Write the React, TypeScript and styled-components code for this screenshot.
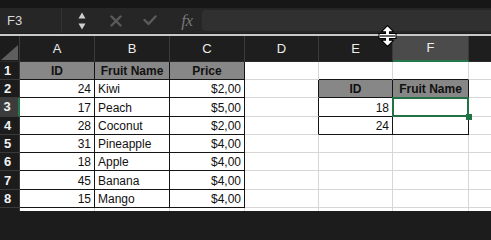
import React from "react";
import styled, { createGlobalStyle } from "styled-components";

const GlobalStyle = createGlobalStyle`
  html, body {
    margin: 0;
    padding: 0;
    background: #1c1c1c;
    overflow: hidden;
  }
  body {
    font-family: "Liberation Sans", Arial, sans-serif;
  }
`;

const Window = styled.div`
  position: relative;
  width: 491px;
  height: 211px;
  overflow: hidden;
  display: flex;
  flex-direction: column;
  background: #1c1c1c;
`;

const TitleStrip = styled.div`
  flex: none;
  height: 8px;
  background: #171717;
`;

const FormulaBar = styled.div`
  flex: none;
  height: 25px;
  display: flex;
  align-items: center;
  background: #262626;
`;

const NameBox = styled.div`
  box-sizing: border-box;
  width: 62px;
  height: 100%;
  display: flex;
  align-items: center;
  padding-left: 7px;
  border-right: 1px solid #313131;
  color: #d8d8d8;
  font-size: 13px;
`;

const BarIcon = styled.div<{ $gap: number; $w: number }>`
  flex: none;
  margin-left: ${(p) => p.$gap}px;
  width: ${(p) => p.$w}px;
  display: flex;
  align-items: center;
  justify-content: center;
`;

const Fx = styled.span`
  font-family: "Liberation Serif", "DejaVu Serif", serif;
  font-style: italic;
  font-size: 17px;
  color: #767676;
  letter-spacing: -0.5px;
`;

const FormulaInput = styled.div`
  flex: 1;
  margin-left: 6px;
  height: 21px;
  background: #303030;
  border-radius: 4px 0 0 4px;
`;

const Separator = styled.div`
  flex: none;
  height: 2px;
  margin-top: 1px;
  background: #c9c9c9;
`;

const Sheet = styled.div`
  flex: none;
  display: grid;
  width: 545px;
  grid-template-columns: 20px 75px 75px 75px 74px 74px 76px 76px;
  grid-template-rows: 25.7px repeat(9, 18.3px);
`;

const Corner = styled.div`
  box-sizing: border-box;
  background: #1c1c1c;
  border-right: 1px solid #3a3a3a;
  border-bottom: 1px solid #2a2a2a;
  display: flex;
  align-items: flex-end;
`;

const ColHead = styled.div<{ $sel?: boolean }>`
  box-sizing: border-box;
  background: ${(p) => (p.$sel ? "#4b4b4b" : "#1e1e1e")};
  border-right: 1px solid #3a3a3a;
  border-bottom: ${(p) => (p.$sel ? "2px solid #22784a" : "1px solid #2a2a2a")};
  display: flex;
  align-items: center;
  justify-content: center;
  color: #ededed;
  font-size: 13px;
`;

const RowHead = styled.div<{ $sel?: boolean }>`
  box-sizing: border-box;
  overflow: hidden;
  background: ${(p) => (p.$sel ? "#3c3c3c" : "#1c1c1c")};
  border-bottom: 1px solid #3a3a3a;
  border-right: ${(p) => (p.$sel ? "2px solid #22784a" : "1px solid #3a3a3a")};
  display: flex;
  align-items: center;
  justify-content: center;
  padding-right: 4px;
  color: #f2f2f2;
  font-size: 13px;
  font-weight: 700;
`;

type Align = "left" | "right" | "center";

const Cell = styled.div<{ $align: Align; $head: boolean; $right: string; $bottom: string }>`
  position: relative;
  box-sizing: border-box;
  background: ${(p) => (p.$head ? "#878787" : "#ffffff")};
  border-right: 1px solid ${(p) => p.$right};
  border-bottom: 1px solid ${(p) => p.$bottom};
  display: flex;
  align-items: flex-end;
  justify-content: ${(p) =>
    p.$align === "right" ? "flex-end" : p.$align === "center" ? "center" : "flex-start"};
  padding: 0 3px 1px;
  font-size: 12px;
  line-height: 14px;
  font-weight: ${(p) => (p.$head ? 700 : 400)};
  color: #111111;
  white-space: nowrap;
`;

const Selection = styled.div`
  position: absolute;
  left: -1px;
  top: -1px;
  right: -1px;
  bottom: -1px;
  border: 2px solid #217346;
  z-index: 2;
`;

const Handle = styled.div`
  position: absolute;
  right: -5px;
  bottom: -5px;
  width: 6px;
  height: 6px;
  background: #217346;
`;

const Cursor = styled.svg`
  position: absolute;
  left: 378px;
  top: 25px;
  z-index: 5;
`;

interface CellData {
  text?: string;
  align?: Align;
  head?: boolean;
}

const fruits: [number, string, string][] = [
  [24, "Kiwi", "$2,00"],
  [17, "Peach", "$5,00"],
  [28, "Coconut", "$2,00"],
  [31, "Pineapple", "$4,00"],
  [18, "Apple", "$4,00"],
  [45, "Banana", "$4,00"],
  [15, "Mango", "$4,00"],
];

const lookup = [18, 24];
// G and row 9 fall past the window edge, so their labels are never seen
const columns = ["A", "B", "C", "D", "E", "F", ""];
const rows = [1, 2, 3, 4, 5, 6, 7, 8, 9];

const boxed = (r: number, c: number) =>
  (c >= 1 && c <= 3 && r >= 1 && r <= 8) || (c >= 5 && c <= 6 && r >= 2 && r <= 4);

const cellAt = (r: number, c: number): CellData => {
  if (r === 1 && c <= 3) {
    return { text: ["ID", "Fruit Name", "Price"][c - 1], align: "center", head: true };
  }
  if (r >= 2 && r <= 8 && c <= 3) {
    const f = fruits[r - 2];
    if (c === 1) return { text: String(f[0]), align: "right" };
    if (c === 2) return { text: f[1], align: "left" };
    return { text: f[2], align: "right" };
  }
  if (r === 2 && (c === 5 || c === 6)) {
    return { text: c === 5 ? "ID" : "Fruit Name", align: "center", head: true };
  }
  if ((r === 3 || r === 4) && c === 5) return { text: String(lookup[r - 3]), align: "right" };
  return {};
};

const GRID = "#d6d6d6";
const INK = "#151515";

const CornerTriangle = () => (
  <svg width="19" height="17" viewBox="0 0 19 17">
    <path d="M1 16 L18 1 L18 16 Z" fill="#5e5e5e" />
  </svg>
);

const Spinner = () => (
  <svg width="8" height="18" viewBox="0 0 8 18">
    <path d="M4 0.5 L7.5 6.5 L0.5 6.5 Z" fill="#cfcfcf" />
    <path d="M0.5 11.5 L7.5 11.5 L4 17.5 Z" fill="#cfcfcf" />
  </svg>
);

const Cross = () => (
  <svg width="12" height="12" viewBox="0 0 12 12">
    <path d="M1.5 1.5 L10.5 10.5 M10.5 1.5 L1.5 10.5" stroke="#5b5b5b" strokeWidth="2.4" strokeLinecap="round" />
  </svg>
);

const Check = () => (
  <svg width="14" height="11" viewBox="0 0 14 11">
    <path d="M1.5 5 L5.5 9 L12.5 1.5" stroke="#5b5b5b" strokeWidth="2.4" fill="none" strokeLinecap="round" strokeLinejoin="round" />
  </svg>
);

export default function App() {
  return (
    <>
      <GlobalStyle />
      <Window>
        <TitleStrip />
        <FormulaBar>
          <NameBox>F3</NameBox>
          <BarIcon $gap={16} $w={8}>
            <Spinner />
          </BarIcon>
          <BarIcon $gap={24} $w={12}>
            <Cross />
          </BarIcon>
          <BarIcon $gap={21} $w={14}>
            <Check />
          </BarIcon>
          <BarIcon $gap={21} $w={18}>
            <Fx>fx</Fx>
          </BarIcon>
          <FormulaInput />
        </FormulaBar>
        <Separator />
        <Sheet>
          <Corner>
            <CornerTriangle />
          </Corner>
          {columns.map((col, i) => (
            <ColHead key={i} $sel={col === "F"}>
              {col}
            </ColHead>
          ))}
          {rows.map((r) => (
            <React.Fragment key={r}>
              <RowHead $sel={r === 3}>{r <= 8 ? r : ""}</RowHead>
              {columns.map((_, i) => {
                const c = i + 1;
                const d = cellAt(r, c);
                const right = boxed(r, c) || boxed(r, c + 1) ? INK : GRID;
                const bottom = boxed(r, c) || boxed(r + 1, c) ? INK : GRID;
                return (
                  <Cell
                    key={c}
                    $align={d.align ?? "left"}
                    $head={!!d.head}
                    $right={right}
                    $bottom={bottom}
                  >
                    {d.text}
                    {r === 3 && c === 6 && (
                      <Selection>
                        <Handle />
                      </Selection>
                    )}
                  </Cell>
                );
              })}
            </React.Fragment>
          ))}
        </Sheet>
        <Cursor width="19" height="22" viewBox="0 0 19 22">
          <path
            d="M9.5 0.7 L15.5 6.7 L11.5 6.7 L11.5 8.5 L18 8.5 L18 13.5 L11.5 13.5 L11.5 15.3 L15.5 15.3 L9.5 21.3 L3.5 15.3 L7.5 15.3 L7.5 13.5 L1 13.5 L1 8.5 L7.5 8.5 L7.5 6.7 L3.5 6.7 Z"
            fill="#ffffff"
            stroke="#000000"
            strokeWidth="1.1"
            strokeLinejoin="round"
          />
          <path d="M2 11 H17" stroke="#000000" strokeWidth="1.2" />
        </Cursor>
      </Window>
    </>
  );
}
